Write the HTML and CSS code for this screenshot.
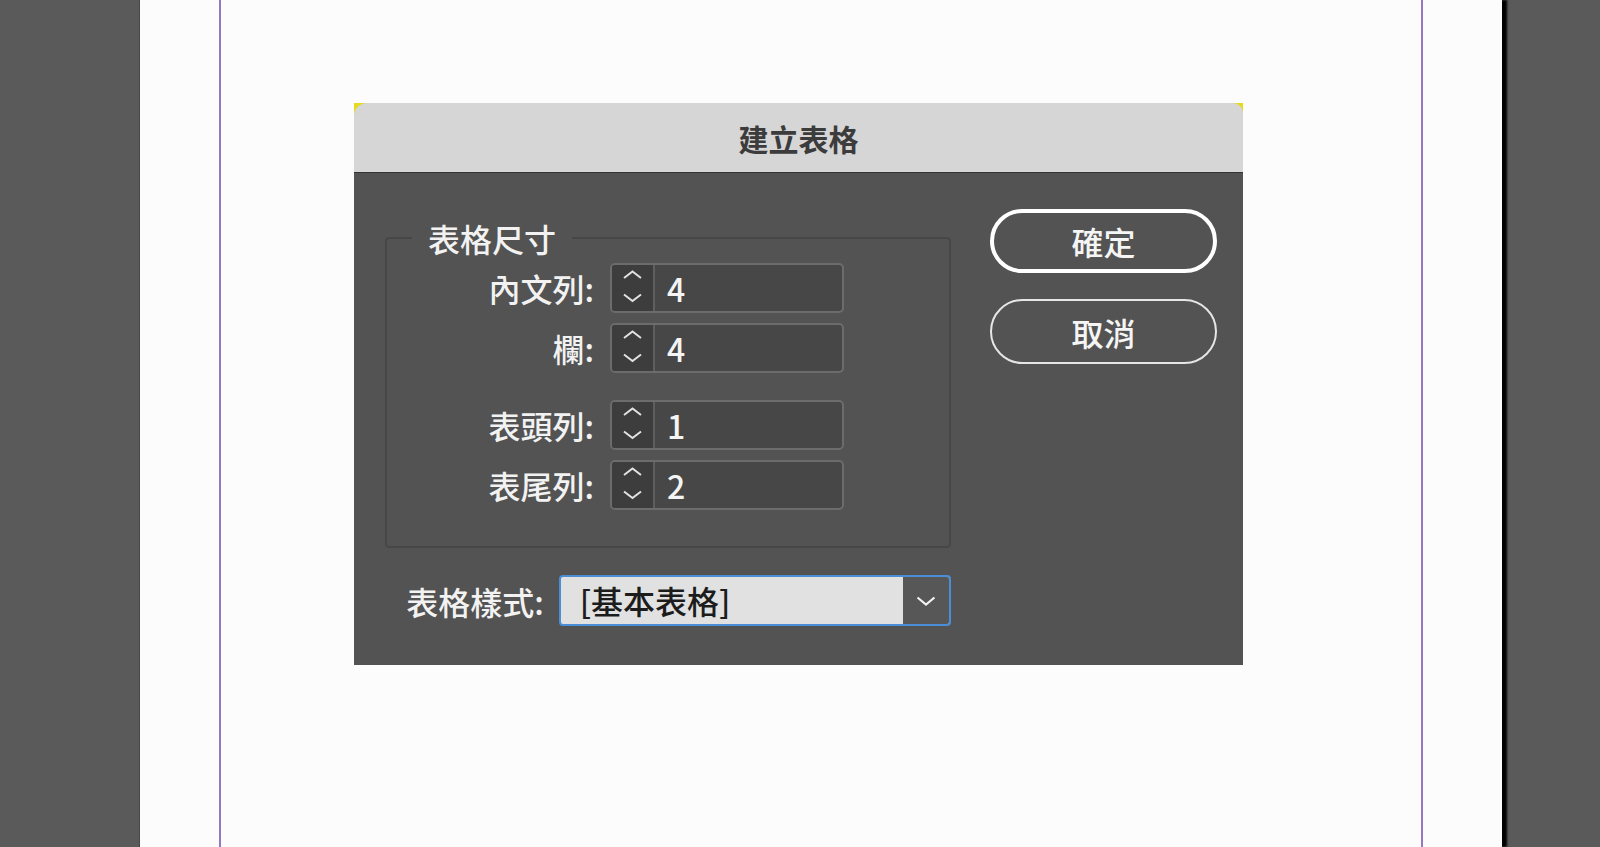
FILE: index.html
```html
<!DOCTYPE html>
<html lang="zh-Hant">
<head>
    <meta charset="UTF-8">
    <meta name="viewport" content="width=device-width, initial-scale=1.0">
    <title>建立表格</title>
    <link rel="stylesheet" href="styles.css">
</head>
<body>
    <div class="page">
        <div class="margins">
            <div class="dialog">
                <div class="dialog-title">建立表格</div>
                <div class="dialog-body">
                    <div class="dialog-main">
                        <fieldset class="group">
                            <legend>表格尺寸</legend>
                            <div class="field-row">
                                <label>內文列:</label>
                                <div class="stepper">
                                    <span class="stepper-arrows">
                                        <svg width="41" height="46" viewBox="0 0 41 46"><path d="M12 13 L20.5 6.5 L29 13 M12 29.5 L20.5 36 L29 29.5" fill="none" stroke="#e2e2e2" stroke-width="2"/></svg>
                                    </span>
                                    <span class="stepper-value">4</span>
                                </div>
                            </div>
                            <div class="field-row">
                                <label>欄:</label>
                                <div class="stepper">
                                    <span class="stepper-arrows">
                                        <svg width="41" height="46" viewBox="0 0 41 46"><path d="M12 13 L20.5 6.5 L29 13 M12 29.5 L20.5 36 L29 29.5" fill="none" stroke="#e2e2e2" stroke-width="2"/></svg>
                                    </span>
                                    <span class="stepper-value">4</span>
                                </div>
                            </div>
                            <div class="field-row spaced">
                                <label>表頭列:</label>
                                <div class="stepper">
                                    <span class="stepper-arrows">
                                        <svg width="41" height="46" viewBox="0 0 41 46"><path d="M12 13 L20.5 6.5 L29 13 M12 29.5 L20.5 36 L29 29.5" fill="none" stroke="#e2e2e2" stroke-width="2"/></svg>
                                    </span>
                                    <span class="stepper-value">1</span>
                                </div>
                            </div>
                            <div class="field-row">
                                <label>表尾列:</label>
                                <div class="stepper">
                                    <span class="stepper-arrows">
                                        <svg width="41" height="46" viewBox="0 0 41 46"><path d="M12 13 L20.5 6.5 L29 13 M12 29.5 L20.5 36 L29 29.5" fill="none" stroke="#e2e2e2" stroke-width="2"/></svg>
                                    </span>
                                    <span class="stepper-value">2</span>
                                </div>
                            </div>
                        </fieldset>
                        <div class="style-row">
                            <label>表格樣式:</label>
                            <div class="select">
                                <span class="select-value">[基本表格]</span>
                                <span class="select-arrow">
                                    <svg width="20" height="10" viewBox="0 0 20 10"><path d="M1.5 1.5 L10 8.5 L18.5 1.5" fill="none" stroke="#f2f2f2" stroke-width="2.2"/></svg>
                                </span>
                            </div>
                        </div>
                    </div>
                    <div class="dialog-buttons">
                        <button class="btn btn-default">確定</button>
                        <button class="btn">取消</button>
                    </div>
                </div>
            </div>
        </div>
    </div>
</body>
</html>
```

FILE: styles.css
```css
body {
    margin: 0;
    height: 847px;
    overflow: hidden;
    background-color: #5a5a5a;
    font-family: "Noto Sans CJK TC", "Noto Sans", sans-serif;
}
.page {
    box-sizing: border-box;
    width: 1362px;
    height: 847px;
    margin-left: 140px;
    padding-left: 79px;
    background-color: #fcfcfc;
    box-shadow: -1px 0 0 #474747, 5px 0 2px #000;
}
.margins {
    box-sizing: border-box;
    width: 1204px;
    height: 100%;
    padding: 103px 0 0 133px;
    border-left: 2px solid #9479c2;
    border-right: 2px solid #9479c2;
}
.dialog {
    width: 889px;
    background: linear-gradient(#e5da1e 0 14px, transparent 14px);
}
.dialog-title {
    box-sizing: border-box;
    height: 70px;
    display: flex;
    align-items: center;
    justify-content: center;
    background-color: #d6d6d6;
    border-bottom: 1px solid #333;
    border-radius: 13px 10px 0 0;
    color: #3c3c3c;
    font-size: 30px;
    font-weight: 700;
}
.dialog-body {
    box-sizing: border-box;
    height: 492px;
    display: flex;
    gap: 39px;
    padding: 36px 0 0 31px;
    background-color: #535353;
    color: #f2f2f2;
    font-weight: 500;
}
.dialog-main {
    width: 566px;
    padding-top: 11px;
}
.group {
    margin: 0;
    padding: 7px 0 36px 0;
    border: 2px solid #474747;
    border-radius: 4px;
    min-width: 0;
}
.group legend {
    margin-left: 25px;
    padding: 0 16px;
    font-size: 32px;
    line-height: 36px;
}
label {
    font-size: 32px;
    line-height: 1;
    text-align: right;
}
.field-row {
    display: flex;
    align-items: center;
    gap: 16px;
}
.field-row label {
    width: 207px;
}
.field-row + .field-row {
    margin-top: 10px;
}
.field-row.spaced {
    margin-top: 27px;
}
.stepper {
    box-sizing: border-box;
    width: 234px;
    height: 50px;
    display: flex;
    border: 2px solid #6c6c6c;
    border-radius: 5px;
    background-color: #474747;
    overflow: hidden;
}
.stepper-arrows {
    width: 41px;
    display: flex;
    background-color: #3d3d3d;
    border-right: 2px solid #5f5f5f;
}
.stepper-value {
    padding-left: 12px;
    font-size: 32px;
    line-height: 46px;
    color: #f4f4f4;
}
.style-row {
    display: flex;
    align-items: center;
    gap: 15px;
    margin-top: 27px;
}
.style-row label {
    width: 159px;
}
.select {
    box-sizing: border-box;
    width: 393px;
    height: 51px;
    display: flex;
    border: 2px solid #4b8ed8;
    border-radius: 4px;
    background-color: #e1e1e1;
    overflow: hidden;
}
.select-value {
    flex: 1;
    padding-left: 19px;
    font-size: 32px;
    line-height: 47px;
    color: #1c1c1c;
}
.select-arrow {
    width: 46px;
    display: flex;
    align-items: center;
    justify-content: center;
    background-color: #575757;
}
.dialog-buttons {
    width: 227px;
    display: flex;
    flex-direction: column;
    gap: 26px;
}
.btn {
    box-sizing: border-box;
    height: 65px;
    padding: 0;
    border: 2px solid #e6e6e6;
    border-radius: 33px;
    background: transparent;
    color: #f5f5f5;
    font-family: inherit;
    font-size: 32px;
    font-weight: 500;
}
.btn-default {
    height: 64px;
    border: 4px solid #fff;
}
```
